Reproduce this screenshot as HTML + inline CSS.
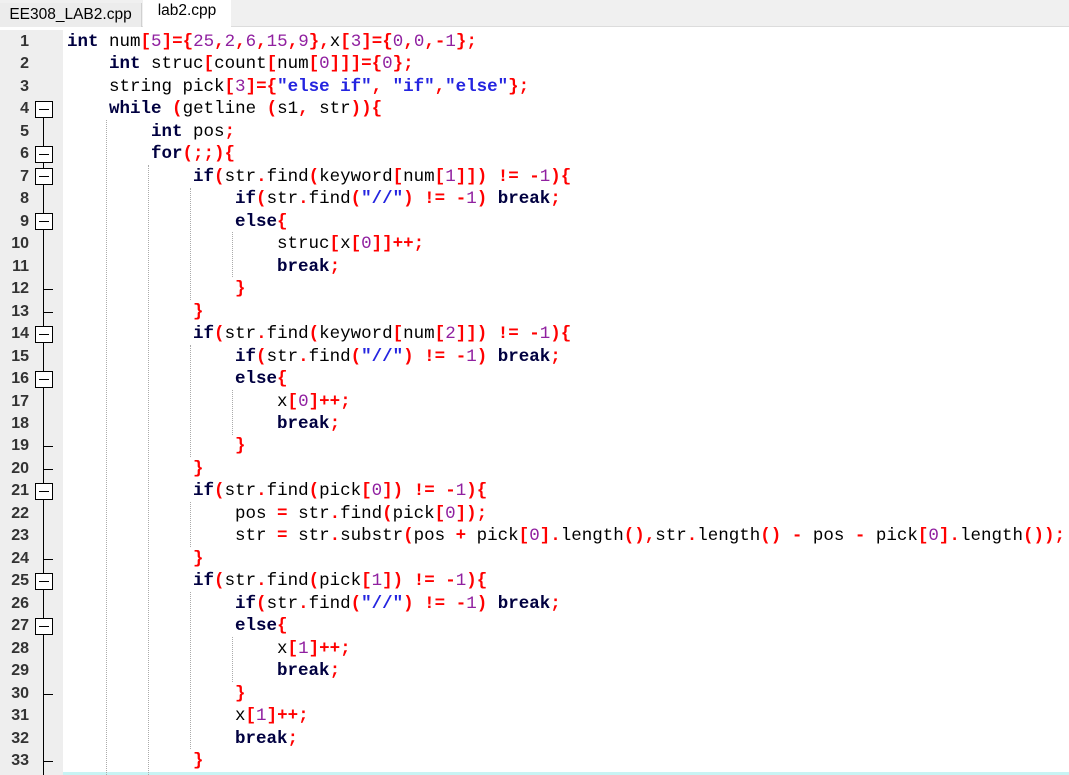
<!DOCTYPE html>
<html><head><meta charset="utf-8"><style>
body{margin:0;width:1069px;height:775px;overflow:hidden;background:#fff;position:relative;font-family:"Liberation Mono",monospace}
.tabbar{position:absolute;left:0;top:0;width:1069px;height:26px;background:#f0f0f0;border-bottom:1px solid #dcdcdc}
.tab{position:absolute;top:0;height:26px;font:15.5px "Liberation Sans",sans-serif;line-height:26px;color:#000}
.t1{left:0;width:141px;background:#ececec;border-right:1px solid #d0d0d0;text-align:center;top:3px;height:24px;line-height:24px}
.t2{left:143px;width:88px;background:#fff;text-align:center;height:28px;line-height:22px}
.gut{position:absolute;left:0;top:30px;width:63px;height:745px;background:#eeeeee}
.ln{position:absolute;left:0;width:29px;text-align:right;font:bold 16px "Liberation Sans",sans-serif;color:#333;height:22.47px;line-height:22.47px}
.code{position:absolute;left:67px;top:31px;font-size:17.5px;line-height:22.47px;white-space:pre;color:#000}
.k{font-weight:bold;color:#000040}
.o{font-weight:bold;color:#ff0000}
.n{color:#9020a0}
.s{font-weight:bold;color:#2424e0}
.box{position:absolute;left:35px;width:18px;height:17px;border:1px solid #000;background:#fff;box-sizing:border-box}
.box:after{content:"";position:absolute;left:3px;right:3px;top:7px;height:1px;background:#000}
.tick{position:absolute;left:43px;width:10px;height:1px;background:#000}
.g{position:absolute;width:0;border-left:1px dotted #aaa}
</style></head><body>
<div class="tabbar"></div>
<div class="tab t1">EE308_LAB2.cpp</div>
<div class="tab t2">lab2.cpp</div>
<div class="gut"></div>
<div style="position:absolute;left:43px;top:118px;width:1px;height:657px;background:#000"></div>
<div id="nums"></div>
<div style="position:absolute;left:63px;top:772px;width:1006px;height:3px;background:#c8f4f4"></div>
<div class="g" style="left:106px;top:120px;height:655px"></div>
<div class="g" style="left:148px;top:165px;height:610px"></div>
<div class="g" style="left:190px;top:188px;height:112px"></div>
<div class="g" style="left:190px;top:345px;height:112px"></div>
<div class="g" style="left:190px;top:502px;height:45px"></div>
<div class="g" style="left:190px;top:592px;height:157px"></div>
<div class="g" style="left:232px;top:232px;height:45px"></div>
<div class="g" style="left:232px;top:390px;height:45px"></div>
<div class="g" style="left:232px;top:637px;height:45px"></div>
<script>
var h='',B=[4,6,7,9,14,16,21,25,27],T=[12,13,19,20,24,30,33];
for(var i=1;i<=33;i++){var y=31+(i-1)*22.47;h+='<div class="ln" style="top:'+y+'px">'+i+'</div>';
if(B.indexOf(i)>=0)h+='<div class="box" style="top:'+(y+2.5)+'px"></div>';
if(T.indexOf(i)>=0)h+='<div class="tick" style="top:'+(y+11)+'px"></div>';}
document.getElementById('nums').innerHTML=h;
</script>
<div class="code"><span class="k">int</span> num<span class="o">[</span><span class="n">5</span><span class="o">]={</span><span class="n">25</span><span class="o">,</span><span class="n">2</span><span class="o">,</span><span class="n">6</span><span class="o">,</span><span class="n">15</span><span class="o">,</span><span class="n">9</span><span class="o">},</span>x<span class="o">[</span><span class="n">3</span><span class="o">]={</span><span class="n">0</span><span class="o">,</span><span class="n">0</span><span class="o">,-</span><span class="n">1</span><span class="o">};</span>
    <span class="k">int</span> struc<span class="o">[</span>count<span class="o">[</span>num<span class="o">[</span><span class="n">0</span><span class="o">]]]={</span><span class="n">0</span><span class="o">};</span>
    string pick<span class="o">[</span><span class="n">3</span><span class="o">]={</span><span class="s">"else if"</span><span class="o">,</span> <span class="s">"if"</span><span class="o">,</span><span class="s">"else"</span><span class="o">};</span>
    <span class="k">while</span> <span class="o">(</span>getline <span class="o">(</span>s1<span class="o">,</span> str<span class="o">)){</span>
        <span class="k">int</span> pos<span class="o">;</span>
        <span class="k">for</span><span class="o">(;;){</span>
            <span class="k">if</span><span class="o">(</span>str<span class="o">.</span>find<span class="o">(</span>keyword<span class="o">[</span>num<span class="o">[</span><span class="n">1</span><span class="o">]])</span> <span class="o">!=</span> <span class="o">-</span><span class="n">1</span><span class="o">){</span>
                <span class="k">if</span><span class="o">(</span>str<span class="o">.</span>find<span class="o">(</span><span class="s">"//"</span><span class="o">)</span> <span class="o">!=</span> <span class="o">-</span><span class="n">1</span><span class="o">)</span> <span class="k">break</span><span class="o">;</span>
                <span class="k">else</span><span class="o">{</span>
                    struc<span class="o">[</span>x<span class="o">[</span><span class="n">0</span><span class="o">]]++;</span>
                    <span class="k">break</span><span class="o">;</span>
                <span class="o">}</span>
            <span class="o">}</span>
            <span class="k">if</span><span class="o">(</span>str<span class="o">.</span>find<span class="o">(</span>keyword<span class="o">[</span>num<span class="o">[</span><span class="n">2</span><span class="o">]])</span> <span class="o">!=</span> <span class="o">-</span><span class="n">1</span><span class="o">){</span>
                <span class="k">if</span><span class="o">(</span>str<span class="o">.</span>find<span class="o">(</span><span class="s">"//"</span><span class="o">)</span> <span class="o">!=</span> <span class="o">-</span><span class="n">1</span><span class="o">)</span> <span class="k">break</span><span class="o">;</span>
                <span class="k">else</span><span class="o">{</span>
                    x<span class="o">[</span><span class="n">0</span><span class="o">]++;</span>
                    <span class="k">break</span><span class="o">;</span>
                <span class="o">}</span>
            <span class="o">}</span>
            <span class="k">if</span><span class="o">(</span>str<span class="o">.</span>find<span class="o">(</span>pick<span class="o">[</span><span class="n">0</span><span class="o">])</span> <span class="o">!=</span> <span class="o">-</span><span class="n">1</span><span class="o">){</span>
                pos <span class="o">=</span> str<span class="o">.</span>find<span class="o">(</span>pick<span class="o">[</span><span class="n">0</span><span class="o">]);</span>
                str <span class="o">=</span> str<span class="o">.</span>substr<span class="o">(</span>pos <span class="o">+</span> pick<span class="o">[</span><span class="n">0</span><span class="o">].</span>length<span class="o">(),</span>str<span class="o">.</span>length<span class="o">()</span> <span class="o">-</span> pos <span class="o">-</span> pick<span class="o">[</span><span class="n">0</span><span class="o">].</span>length<span class="o">());</span>
            <span class="o">}</span>
            <span class="k">if</span><span class="o">(</span>str<span class="o">.</span>find<span class="o">(</span>pick<span class="o">[</span><span class="n">1</span><span class="o">])</span> <span class="o">!=</span> <span class="o">-</span><span class="n">1</span><span class="o">){</span>
                <span class="k">if</span><span class="o">(</span>str<span class="o">.</span>find<span class="o">(</span><span class="s">"//"</span><span class="o">)</span> <span class="o">!=</span> <span class="o">-</span><span class="n">1</span><span class="o">)</span> <span class="k">break</span><span class="o">;</span>
                <span class="k">else</span><span class="o">{</span>
                    x<span class="o">[</span><span class="n">1</span><span class="o">]++;</span>
                    <span class="k">break</span><span class="o">;</span>
                <span class="o">}</span>
                x<span class="o">[</span><span class="n">1</span><span class="o">]++;</span>
                <span class="k">break</span><span class="o">;</span>
            <span class="o">}</span></div>
</body></html>
